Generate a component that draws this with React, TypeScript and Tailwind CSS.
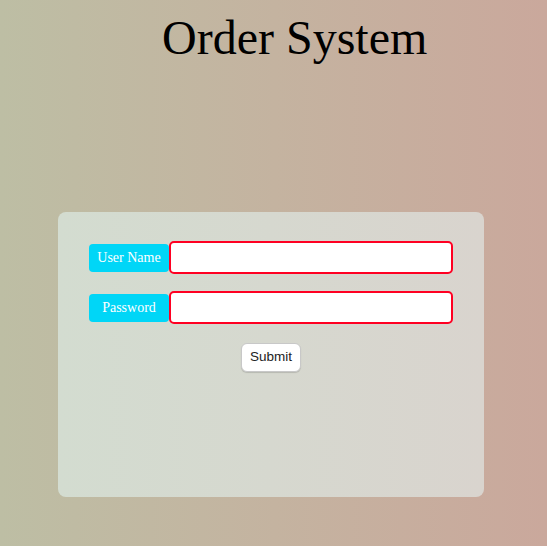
const App = () => {
  return (
    <div className="min-h-[546px] w-full bg-gradient-to-r from-[#bdbea4] to-[#caa89c] font-['Liberation_Serif',serif] overflow-hidden">
      {/* Heading */}
      <h1 className="pt-[10px] pl-[162px] text-[48px] leading-[56px] text-black">Order System</h1>

      {/* Login card */}
      <div className="mt-[146px] ml-[58px] h-[285px] w-[426px] rounded-lg bg-gradient-to-r from-[#d3dcd0] to-[#d9d4ce] pt-[29px] pl-[31px]">
        <div className="flex items-center">
          <label className="flex h-[28px] w-[80px] items-center justify-center rounded-[4px] bg-[#00d6f7] text-[14px] text-white">
            User Name
          </label>
          <input className="h-[33px] w-[284px] rounded-[5px] border-2 border-[#ff0022] bg-white outline-none" />
        </div>
        <div className="mt-[17px] flex items-center">
          <label className="flex h-[28px] w-[80px] items-center justify-center rounded-[4px] bg-[#00d6f7] text-[14px] text-white">
            Password
          </label>
          <input
            type="password"
            className="h-[33px] w-[284px] rounded-[5px] border-2 border-[#ff0022] bg-white outline-none"
          />
        </div>
        <div className="mt-[19px] flex w-[364px] justify-center">
          <button className="h-[29px] rounded-[6px] border border-[#c8c8c8] bg-white px-[8px] font-['Liberation_Sans',sans-serif] text-[13.5px] text-[#222] shadow-[0_1px_1px_rgba(0,0,0,0.15)]">
            Submit
          </button>
        </div>
      </div>
    </div>
  );
};

export default App;
